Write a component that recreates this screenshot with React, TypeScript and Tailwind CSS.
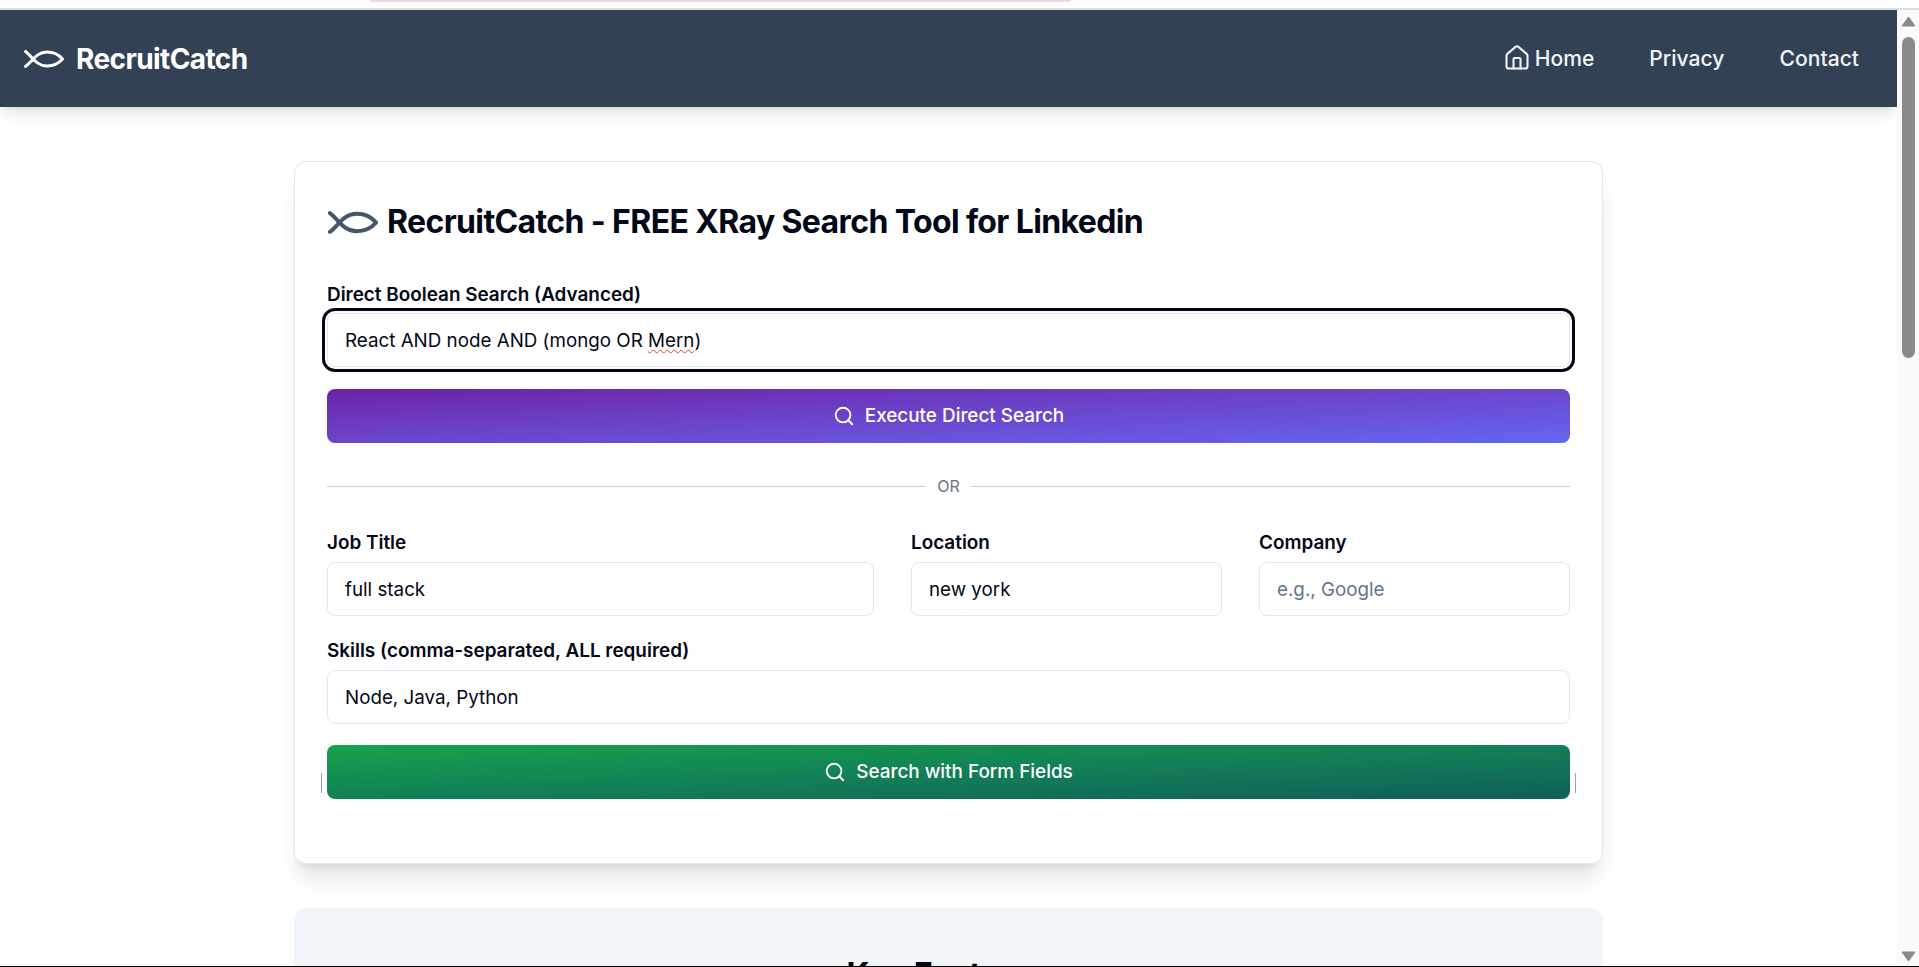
import React from 'react';
import { House, Search } from 'lucide-react';

const FishLogo: React.FC<{ className?: string; strokeWidth?: number }> = ({ className, strokeWidth = 3 }) => (
  <svg viewBox="0 0 40 18" fill="none" stroke="currentColor" strokeWidth={strokeWidth} strokeLinecap="round" strokeLinejoin="round" className={className}>
    <path d="M1.5 1.500C8 6 12 16 23 16C30 16 35.5 12.500 38.500 9C35.500 5.500 30 2 23 2C12 2 8 12 1.500 16.500" />
  </svg>
);

const labelCls = 'block text-[18.9px] leading-[24px] font-semibold text-[#020817]';
const inputCls =
  'block w-full h-[54px] rounded-lg border border-[#e2e8f0] bg-white px-[17px] text-[18.8px] text-[#020817] placeholder:text-[#64748b] outline-none';

const Field: React.FC<{ label: string; value?: string; placeholder?: string }> = ({ label, value, placeholder }) => (
  <div>
    <label className={labelCls}>{label}</label>
    <input readOnly value={value ?? ''} placeholder={placeholder} className={`${inputCls} mt-[7px]`} />
  </div>
);

const App: React.FC = () => {
  return (
    <div className="h-[967px] overflow-hidden flex flex-col bg-white font-['Inter',sans-serif]">
      {/* strip of the page above */}
      <div className="h-[8px] shrink-0">
        <div className="ml-[370px] w-[701px] h-[2px] bg-[#e0e0e0] rounded-b-sm" />
      </div>
      <div className="h-[2px] shrink-0 bg-[#dedede]" />

      <div className="flex flex-1 min-h-0">
        <div className="flex-1 min-w-0 overflow-hidden">
          <header className="relative h-[97px] bg-[#334155] shadow-lg flex items-center justify-between pl-[24px] pr-[38px]">
            <div className="flex items-center gap-[12px] text-white">
              <FishLogo className="w-[40px] h-[18px]" />
              <span className="text-[28px] font-bold leading-none tracking-[-0.6px]">RecruitCatch</span>
            </div>
            <nav className="flex items-center gap-[55px] text-[21.1px] font-medium text-[#f1f5f9]">
              <a className="flex items-center gap-[4px]">
                <House size={28} strokeWidth={1.75} />
                Home
              </a>
              <a>Privacy</a>
              <a>Contact</a>
            </nav>
          </header>

          <main className="w-[1309px] mx-auto mt-[54px]">
            <section className="h-[703px] rounded-xl border border-[#e2e8f0] bg-white shadow-xl px-[32px] pt-[39px]">
              <h1 className="flex items-center gap-[9px] h-[42px] text-[32px] font-bold tracking-[-0.62px] text-[#020817]">
                <FishLogo className="ml-[1px] w-[50px] h-[23px] text-[#475569]" strokeWidth={3.2} />
                RecruitCatch - FREE XRay Search Tool for Linkedin
              </h1>

              <label className={`${labelCls} mt-[40px]`}>Direct Boolean Search (Advanced)</label>
              <div className="mt-[6px] flex items-center h-[54px] rounded-lg border border-[#e2e8f0] bg-white pl-[17px] pr-[17px] pt-[2px] text-[18.8px] text-[#020817] ring-[3px] ring-[#020817] ring-offset-2">
                <span>
                  React AND node AND (mongo OR{' '}
                  <span className="underline decoration-wavy decoration-[#e53e3e] decoration-1 underline-offset-2">Mern</span>)
                </span>
              </div>

              <button className="mt-[22px] w-full h-[54px] rounded-lg bg-gradient-to-br from-[#6b21a8] to-[#6366f1] text-white text-[18.9px] font-medium flex items-center justify-center gap-[10px]">
                <Search size={22} />
                Execute Direct Search
              </button>

              <div className="mt-[33px] flex items-center gap-[11px]">
                <div className="flex-1 h-px bg-[#cfcfd6]" />
                <span className="text-[16px] leading-[20px] text-[#6b7280]">OR</span>
                <div className="flex-1 h-px bg-[#cfcfd6]" />
              </div>

              <div className="mt-[35px] grid grid-cols-[547px_311px_311px] gap-x-[37px]">
                <Field label="Job Title" value="full stack" />
                <Field label="Location" value="new york" />
                <Field label="Company" placeholder="e.g., Google" />
              </div>

              <div className="mt-[23px]">
                <Field label="Skills (comma-separated, ALL required)" value="Node, Java, Python" />
              </div>

              <div className="relative mt-[21px]">
                <span className="absolute -left-[6px] top-[28px] w-px h-[20px] bg-[#9ca3af]" />
                <span className="absolute -right-[6px] top-[28px] w-px h-[20px] bg-[#9ca3af]" />
                <button className="w-full h-[54px] rounded-lg bg-gradient-to-br from-[#16a34a] to-[#115e59] text-white text-[18.9px] font-medium flex items-center justify-center gap-[10px]">
                  <Search size={22} />
                  Search with Form Fields
                </button>
              </div>
            </section>

            <section className="mt-[44px] rounded-xl bg-[#f1f5f9] pt-[47px] pb-[40px] text-center">
              <h2 className="text-[32px] font-bold leading-[40px] text-[#020817]">Key Features</h2>
            </section>
          </main>
        </div>

        {/* scrollbar */}
        <div className="w-[22px] shrink-0 bg-[#fafafa] flex flex-col items-center pt-[6px] pb-[4px]">
          <svg viewBox="0 0 15 11" className="w-[15px] h-[11px] fill-[#8a8a8a] stroke-[#8a8a8a]" strokeLinejoin="round">
            <path d="M7.500 1L14 10H1Z" />
          </svg>
          <div className="mt-[10px] w-[13px] h-[321px] rounded-full bg-[#8a8a8a]" />
          <svg viewBox="0 0 15 11" className="mt-auto w-[15px] h-[11px] fill-[#8a8a8a] stroke-[#8a8a8a]" strokeLinejoin="round">
            <path d="M1 1H14L7.500 10Z" />
          </svg>
        </div>
      </div>

      <div className="h-px shrink-0 bg-black" />
    </div>
  );
};

export default App;
